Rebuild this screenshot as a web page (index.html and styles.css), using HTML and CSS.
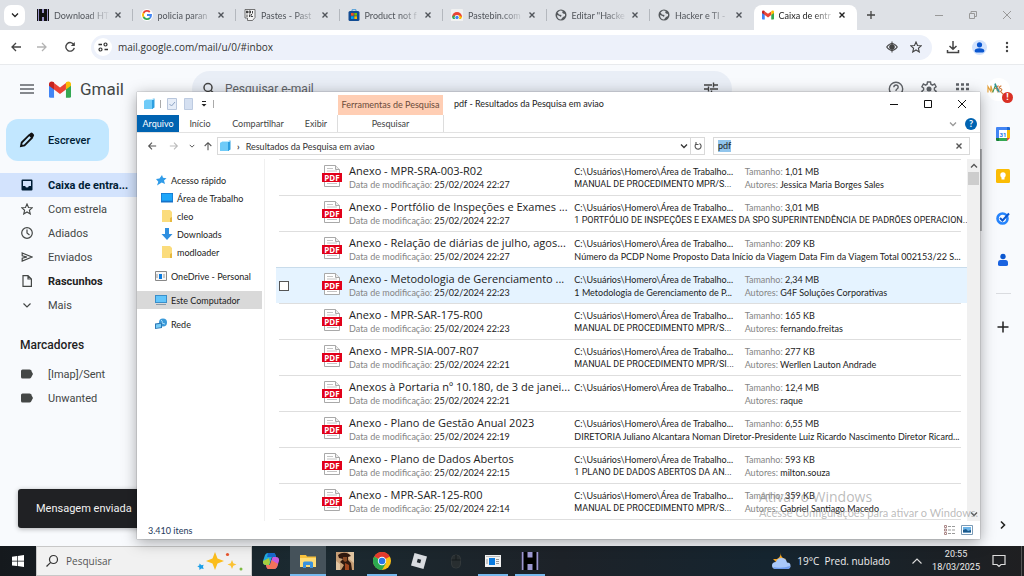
FILE: index.html
```html
<!DOCTYPE html>
<html lang="pt-BR">
	<head>
		<meta charset="utf-8">
		<title>Caixa de entrada - Gmail</title>
		<link rel="stylesheet" href="styles.css">
	</head>
	<body>
		<svg class="defs" aria-hidden="true">
			<symbol id="i-pdf" viewBox="0 0 20 22">
				<path d="M2.5.5h11l4 4v17h-15z" fill="#fff" stroke="#a9a9a9"/>
				<path d="M13.5.5v4h4" fill="#ececec" stroke="#a9a9a9"/>
				<path d="M5 3.500h6M5 6h10M5 18.500h10" stroke="#c4c4c4"/>
				<rect x="0" y="8" width="20" height="9" fill="#e2001a"/>
				<text x="10" y="15.500" text-anchor="middle" font-size="8" font-weight="bold" fill="#fff">PDF</text>
			</symbol>
			<symbol id="i-globe" viewBox="0 0 12 12">
				<circle cx="6" cy="6" r="5.500" fill="#54585c"/>
				<path d="M5 1.500L2.500 3.500 4 5.500l2.500.5L6 8 4.500 7 2 6c0 3 2 4.500 4 4.500L8 8l2-1V5L8 4.500 7 3l1-1z" fill="#dee1e6"/>
			</symbol>
			<symbol id="i-gmail" viewBox="0 0 24 18">
				<path d="M0 3v13.500Q0 18 1.600 18H5.500V8z" fill="#4285f4"/>
				<path d="M24 3v13.500Q24 18 22.400 18H18.500V8z" fill="#34a853"/>
				<path d="M5.500 1.800L12 6.700l6.500-4.900V9L12 13.800 5.500 9z" fill="#ea4335"/>
				<path d="M0 3C0 0 3.300-.7 5.500 1.200V9L0 5z" fill="#c5221f"/>
				<path d="M24 3c0-3-3.300-3.700-5.500-1.800V9L24 5z" fill="#fbbc04"/>
			</symbol>
			<symbol id="i-x" viewBox="0 0 8 8"><path d="M1.500 1.500l5 5m0-5l-5 5" fill="none" stroke="currentColor" stroke-width="1.400"/></symbol>
			<symbol id="i-down" viewBox="0 0 8 8"><path d="M1 2.500l3 3 3-3" fill="none" stroke="currentColor" stroke-width="1.300"/></symbol>
			<symbol id="i-back" viewBox="0 0 12 12"><path d="M11 6H2m4-4L2 6l4 4" fill="none" stroke="currentColor" stroke-width="1.300"/></symbol>
			<symbol id="i-lib" viewBox="0 0 12 12">
				<path d="M1 3l3-2v9l-3 1z" fill="#9be0ff"/><path d="M3 2h7v9H1V3z" fill="#6fcbf8"/><path d="M9 1l2.500-.5V9.500L9 11z" fill="#2c9fe0"/><path d="M3 2l1-1h7.500L10 2z" fill="#bdecff"/>
			</symbol>
			<symbol id="i-folder" viewBox="0 0 12 12"><path d="M1 0h8l2 2v10H1z" fill="#fbdc7c"/><path d="M9 8l2-1v5H9z" fill="#e7b93f"/></symbol>
			<symbol id="i-tag" viewBox="0 0 12 10"><path d="M1.500.5h7Q9.500.5 10 1.200L12 5l-2 3.800q-.5.700-1.500.7h-7Q0 9.500 0 8V2Q0 .5 1.500.5z" fill="#444746"/></symbol>
			<symbol id="i-star" viewBox="0 0 12 12"><path d="M6 1l1.500 3.500 3.700.3-2.800 2.500.9 3.700L6 9l-3.300 2 .9-3.700L.8 4.800l3.700-.3z" fill="none" stroke="currentColor" stroke-width="1.100"/></symbol>
			<symbol id="i-app" viewBox="0 0 16 12">
				<rect width="16" height="12" fill="#f3f3f3"/><rect x="1" y="1" width="14" height="1" fill="#bbb"/><rect x="4" y="3" width="6" height="7" fill="#0a7be0"/><path d="M11 4.500h3M11 6.500h3M11 8.500h3M2 4v5" stroke="#999"/>
			</symbol>
		</svg>

		<!-- browser -->
		<div class="tabstrip">
			<button class="tab-search" aria-label="Pesquisar guias"><svg class="s8"><use href="#i-down"/></svg></button>
			<div class="tabs">
				<div class="tab">
					<svg class="s12" viewBox="0 0 12 12"><path fill="#111" d="M0 0h12v12H0z"/><path fill="#9993c8" d="M1 0h1v12H1zM10 0h1v12h-1zM5 0h2v4H5zM5 8h2v4H5z"/></svg>
					<span class="tab-name">Download HT</span><button class="x" aria-label="Fechar"><svg class="s8"><use href="#i-x"/></svg></button>
				</div>
				<div class="tab">
					<svg class="s12" viewBox="0 0 12 12"><circle cx="6" cy="6" r="6" fill="#fff"/><g fill="none" stroke-width="1.900"><path d="M8.800 3A4 4 0 0 0 2.500 4" stroke="#ea4335"/><path d="M2.500 4a4 4 0 0 0 0 4" stroke="#fbbc04"/><path d="M2.500 8a4 4 0 0 0 6.300 1" stroke="#34a853"/><path d="M8.800 9A4 4 0 0 0 10 6H6" stroke="#4285f4"/></g></svg>
					<span class="tab-name">policia paran</span><button class="x" aria-label="Fechar"><svg class="s8"><use href="#i-x"/></svg></button>
				</div>
				<div class="tab">
					<svg class="s12" viewBox="0 0 12 12"><path d="M1 .5h10v8L8.500 11.500H3.500V9H1z" fill="#f3f3f3" stroke="#555" stroke-width=".8"/><path d="M2.500 2h1v2h-1zM5 2h1.500v2H5zM8.500 2v2.500M3 5.500v2.500M5.500 5.500v2.500M8 5.500H7v2h2" fill="none" stroke="#333" stroke-width=".9"/></svg>
					<span class="tab-name">Pastes - Past</span><button class="x" aria-label="Fechar"><svg class="s8"><use href="#i-x"/></svg></button>
				</div>
				<div class="tab">
					<svg class="s12" viewBox="0 0 12 12"><path d="M4 2V.7h4V2" fill="none" stroke="#4b9ad8"/><rect x=".5" y="2" width="11" height="10" rx="1.500" fill="#124c93"/><path fill="#f25022" d="M3 4h2.700v2.700H3z"/><path fill="#7fba00" d="M6.300 4H9v2.700H6.300z"/><path fill="#00a4ef" d="M3 7.300h2.700V10H3z"/><path fill="#ffb900" d="M6.300 7.300H9V10H6.300z"/></svg>
					<span class="tab-name">Product not f</span><button class="x" aria-label="Fechar"><svg class="s8"><use href="#i-x"/></svg></button>
				</div>
				<div class="tab">
					<svg class="s12" viewBox="0 0 12 12"><rect width="12" height="12" rx="1" fill="#f1f1f1"/><path d="M1 8a5 5 0 0 1 10 0z" fill="#ea4335"/><path d="M1 8l2-2 3 4H2z" fill="#34a853"/><path d="M11 8L8 6 6 10h4z" fill="#fbbc04"/><circle cx="6" cy="8.500" r="2.400" fill="#fff"/><circle cx="6" cy="8.500" r="1.700" fill="#4285f4"/><path fill="#f1f1f1" d="M0 10h12v2H0z"/></svg>
					<span class="tab-name">Pastebin.com</span><button class="x" aria-label="Fechar"><svg class="s8"><use href="#i-x"/></svg></button>
				</div>
				<div class="tab">
					<svg class="s12"><use href="#i-globe"/></svg>
					<span class="tab-name">Editar "Hacke</span><button class="x" aria-label="Fechar"><svg class="s8"><use href="#i-x"/></svg></button>
				</div>
				<div class="tab">
					<svg class="s12"><use href="#i-globe"/></svg>
					<span class="tab-name">Hacker e TI -</span><button class="x" aria-label="Fechar"><svg class="s8"><use href="#i-x"/></svg></button>
				</div>
				<div class="tab active">
					<svg class="s12"><use href="#i-gmail"/></svg>
					<span class="tab-name">Caixa de entr</span><button class="x" aria-label="Fechar"><svg class="s8"><use href="#i-x"/></svg></button>
				</div>
			</div>
			<button class="new-tab" aria-label="Nova guia"><svg class="s8" viewBox="0 0 8 8"><path d="M4 0v8M0 4h8" stroke="#444" stroke-width="1.300"/></svg></button>
			<div class="win-buttons">
				<button aria-label="Minimizar"><svg class="s8" viewBox="0 0 8 8"><path d="M0 4.500h8" stroke="#999"/></svg></button>
				<button aria-label="Restaurar"><svg class="s8" viewBox="0 0 8 8"><path d="M.5 2.500h5v5h-5zM2 2V.5h5.500v5H6" fill="none" stroke="#999"/></svg></button>
				<button aria-label="Fechar janela"><svg class="s8" viewBox="0 0 8 8"><path d="M0 0l8 8m0-8L0 8" stroke="#999"/></svg></button>
			</div>
		</div>

		<div class="toolbar">
			<button aria-label="Voltar"><svg class="s12"><use href="#i-back"/></svg></button>
			<button class="off flip" aria-label="Avançar"><svg class="s12"><use href="#i-back"/></svg></button>
			<button aria-label="Recarregar"><svg class="s12" viewBox="0 0 12 12"><path d="M10 4A4.300 4.300 0 1 0 10.300 6.800" fill="none" stroke="currentColor" stroke-width="1.400"/><path d="M10.800 1v4h-4z" fill="currentColor"/></svg></button>
			<div class="omnibox">
				<span class="site"><svg class="s12" viewBox="0 0 12 12"><path d="M1.500 3.500H5M7.500 8.500H11" stroke="#333" stroke-width="1.400"/><circle cx="8.500" cy="3.500" r="1.500" fill="none" stroke="#333" stroke-width="1.200"/><circle cx="3.500" cy="8.500" r="1.500" fill="none" stroke="#333" stroke-width="1.200"/></svg></span>
				<input class="url" type="text" aria-label="Endereço" value="mail.google.com/mail/u/0/#inbox">
				<svg class="s12" viewBox="0 0 12 12"><path d="M.7 6Q6-1 11.300 6 6 13 .7 6z" fill="none" stroke="#444" stroke-width="1.100"/><circle cx="6" cy="6" r="2.800" fill="#444"/><path d="M6 .5v11" stroke="#444"/></svg>
				<svg class="s12"><use href="#i-star"/></svg>
			</div>
			<button class="dl" aria-label="Downloads"><svg class="s14" viewBox="0 0 14 14"><path d="M7 1v8M3.500 6L7 9.300 10.500 6M1.500 10v2.500h11V10" fill="none" stroke="#444" stroke-width="1.500"/></svg></button>
			<button class="person" aria-label="Perfil"><svg class="s12" viewBox="0 0 12 12"><circle cx="6" cy="3.500" r="2.400" fill="#0b57d0"/><path d="M1.500 10.500V9q0-2.400 4.500-2.400T10.500 9v1.500z" fill="#0b57d0"/></svg></button>
			<button class="dots" aria-label="Menu"><svg class="s12" viewBox="0 0 12 12"><g fill="#444"><circle cx="6" cy="2" r="1.200"/><circle cx="6" cy="6" r="1.200"/><circle cx="6" cy="10" r="1.200"/></g></svg></button>
		</div>

		<!-- gmail -->
		<div class="gmail">
			<header class="g-head">
				<button class="burger" aria-label="Menu principal"><svg class="s14" viewBox="0 0 14 14"><path d="M0 3h14M0 7h14M0 11h14" stroke="#5f6368" stroke-width="1.400"/></svg></button>
				<svg class="g-logo"><use href="#i-gmail"/></svg>
				<span class="g-name">Gmail</span>
				<label class="g-search">
					<svg class="s14" viewBox="0 0 14 14"><circle cx="6" cy="5.500" r="4" fill="none" stroke="#444" stroke-width="1.500"/><path d="M9 8.500l4 4" stroke="#444" stroke-width="1.500"/></svg>
					<input type="text" placeholder="Pesquisar e-mail">
					<svg class="s14" viewBox="0 0 14 14"><path d="M0 3h8m2 0h4M9.500.5v5M0 7h4m2 0h8M4.500 4.500v5M0 11h6m2 0h6M7.500 8.500v5" stroke="#444" stroke-width="1.400"/></svg>
				</label>
				<div class="g-tools">
					<svg class="s16" viewBox="0 0 16 16"><circle cx="8" cy="8" r="6.700" fill="none" stroke="#5f6368" stroke-width="1.400"/><path d="M5.800 6.200Q6 4 8 4t2.200 2Q10.200 7.200 9 8T8 10m0 1v1.500" fill="none" stroke="#5f6368" stroke-width="1.400"/></svg>
					<svg class="s16" viewBox="0 0 16 16"><path d="M6.500 1h3l.4 2.200 1.600.9L13.600 3l1.500 2.700L13.400 7v2l1.700 1.300-1.500 2.700-2.100-1-1.600.9L9.500 15h-3l-.4-2.100-1.600-.9-2.100 1L.9 10.300 2.600 9V7L.9 5.700 2.400 3l2.100 1.100 1.600-.9z" fill="none" stroke="#5f6368" stroke-width="1.400"/><circle cx="8" cy="8" r="2.500" fill="#5f6368"/></svg>
					<svg class="s16" viewBox="0 0 16 16"><path d="M2 3.500h3m2 0h3m2 0h3M2 8h3m2 0h3m2 0h3M2 12.500h3m2 0h3m2 0h3" stroke="#5f6368" stroke-width="2.600"/></svg>
				</div>
				<div class="avatar">
					<svg viewBox="0 0 24 24"><circle cx="12" cy="12" r="12" fill="#fff"/><g fill="none" stroke-width="1.200"><path d="M1 15V9l3 5V8l2 7" stroke="#e3a13b"/><path d="M6 15l3-8 2 7" stroke="#3f9c5a"/><path d="M12 8l-3 3q6 0 2 4M15 8q-4 2-1 3t0 3l3 3" stroke="#d17a3c"/><path d="M8 6l5 9" stroke="#2a8fa8"/></g></svg>
					<span class="alert">!</span>
				</div>
			</header>
			<div class="g-body">
				<aside class="g-side">
					<button class="compose"><svg class="s16" viewBox="0 0 16 16"><path d="M2 14l.7-3.500 7.600-7.600 2.800 2.800-7.600 7.600z" fill="none" stroke="#111" stroke-width="1.800"/><path d="M10 2.500l1.500-1.500q1-.8 2 0l1.200 1.200q.8 1 0 2L13.300 5.800z" fill="#111"/></svg>Escrever</button>
					<nav>
						<a href="#inbox" class="sel"><svg class="s12" viewBox="0 0 12 12"><path fill-rule="evenodd" d="M1.500.5h9q1 0 1 1v9q0 1-1 1h-9q-1 0-1-1v-9q0-1 1-1zM2 2v5h2.200Q4.500 8.500 6 8.500T7.800 7H10V2z" fill="#001d35"/></svg>Caixa de entra...</a>
						<a href="#starred"><svg class="s12"><use href="#i-star"/></svg>Com estrela</a>
						<a href="#snoozed"><svg class="s12" viewBox="0 0 12 12"><circle cx="6" cy="6" r="5.300" fill="none" stroke="#444746" stroke-width="1.200"/><path d="M6 2.500V6l2.500 2" fill="none" stroke="#444746" stroke-width="1.200"/></svg>Adiados</a>
						<a href="#sent"><svg class="s12" viewBox="0 0 12 12"><path d="M1.200 2L11 6l-9.800 4V7.200L6 6 1.200 4.800z" fill="none" stroke="#444746" stroke-width="1.200"/></svg>Enviados</a>
						<a href="#drafts" class="bold"><svg class="s12" viewBox="0 0 12 12"><path d="M2 .6h5l3.400 3.400v7.400H2zM7 .6V4h3.400" fill="none" stroke="#444746" stroke-width="1.200"/></svg>Rascunhos</a>
						<a href="#more"><svg class="s12" viewBox="0 0 12 12"><path d="M2.500 4.500L6 8l3.500-3.500" fill="none" stroke="#444746" stroke-width="1.200"/></svg>Mais</a>
					</nav>
					<h2>Marcadores</h2>
					<nav>
						<a href="#imap"><svg class="s12"><use href="#i-tag"/></svg>[Imap]/Sent</a>
						<a href="#unwanted"><svg class="s12"><use href="#i-tag"/></svg>Unwanted</a>
					</nav>
				</aside>
				<aside class="g-apps">
					<svg class="s14" viewBox="0 0 14 14"><path fill="#4285f4" d="M0 1q0-1 1-1h10v3H3v8H0z"/><path fill="#1967d2" d="M11 0h2q1 0 1 1v2h-3z"/><path fill="#fbbc04" d="M11 3h3v8h-3z"/><path fill="#34a853" d="M3 11h8v3H3z"/><path fill="#188038" d="M0 11h3v3H1q-1 0-1-1z"/><path fill="#ea4335" d="M11 11h3l-3 3z"/><path fill="#fff" d="M3 3h8v8H3z"/><text x="7" y="9.500" text-anchor="middle" font-size="6" font-weight="bold" fill="#1a73e8">31</text></svg>
					<svg class="s14" viewBox="0 0 14 14"><rect width="14" height="14" rx="1.500" fill="#fbbc04"/><circle cx="7" cy="6" r="2.700" fill="#fff"/><path d="M5.500 8h3v2.500h-3z" fill="#fff"/></svg>
					<svg class="s14" viewBox="0 0 14 14"><circle cx="6.500" cy="7.500" r="5" fill="none" stroke="#2684fc" stroke-width="2.600"/><path d="M4 7l2.500 2.500L13 2.500" fill="none" stroke="#0b57d0" stroke-width="2"/></svg>
					<svg class="s14" viewBox="0 0 14 14"><circle cx="7" cy="3.500" r="2.700" fill="#0b57d0"/><path d="M2 10q0-3 2.500-3h5Q12 7 12 10v1.500Q12 13 10 13H4q-2 0-2-1.500z" fill="#1a63e0"/></svg>
					<hr>
					<svg class="s14 plus" viewBox="0 0 14 14"><path d="M7 1.500v11M1.500 7h11" stroke="#222" stroke-width="1.500"/></svg>
					<svg class="s12 expand" viewBox="0 0 12 12"><path d="M4 2.500L7.500 6 4 9.500" fill="none" stroke="#222" stroke-width="1.600"/></svg>
				</aside>
			</div>
		</div>

		<div class="page-thumb"></div>
		<div class="toast">Mensagem enviada</div>

		<!-- file explorer -->
		<section class="explorer">
			<div class="ex-title">
				<div class="quick">
					<svg class="s12"><use href="#i-lib"/></svg><i></i>
					<svg class="s12" viewBox="0 0 12 12"><path d="M1.500.5h9v11h-9z" fill="#e6edf8" stroke="#b8c6dc"/><path d="M3.500 6l2 2 3.500-4" fill="none" stroke="#8ea4c4"/></svg>
					<svg class="s12" viewBox="0 0 12 12"><path d="M1.500.5h8v11h-8z" fill="#d5e0f1" stroke="#bdcbe1"/></svg>
					<svg class="s8" viewBox="0 0 8 8"><path d="M2 1.500h4" stroke="#222"/><path d="M1.500 4h5L4 6.500z" fill="#222"/></svg><i></i>
				</div>
				<span class="ctx">Ferramentas de Pesquisa</span>
				<span class="name">pdf - Resultados da Pesquisa em aviao</span>
				<div class="ex-buttons">
					<button aria-label="Minimizar"><svg class="s8" viewBox="0 0 8 8"><path d="M0 4.500h8" stroke="#111"/></svg></button>
					<button aria-label="Maximizar"><svg class="s8" viewBox="0 0 8 8"><path d="M.5.5h7v7h-7z" fill="none" stroke="#111"/></svg></button>
					<button aria-label="Fechar"><svg class="s8" viewBox="0 0 8 8"><path d="M0 0l8 8m0-8L0 8" stroke="#111"/></svg></button>
				</div>
			</div>
			<div class="ribbon">
				<button class="file">Arquivo</button><button>Início</button><button class="wide">Compartilhar</button><button>Exibir</button><button class="search-tab">Pesquisar</button>
				<svg class="s8"><use href="#i-down"/></svg><span class="help">?</span>
			</div>
			<div class="address">
				<button aria-label="Voltar"><svg class="s10" viewBox="0 0 12 12"><use href="#i-back"/></svg></button>
				<button class="off flip" aria-label="Avançar"><svg class="s10" viewBox="0 0 12 12"><use href="#i-back"/></svg></button>
				<button class="small" aria-label="Recentes"><svg class="s8"><use href="#i-down"/></svg></button>
				<button class="up" aria-label="Acima"><svg class="s10" viewBox="0 0 12 12"><use href="#i-back"/></svg></button>
				<div class="path"><svg class="s12"><use href="#i-lib"/></svg><b>›</b><span>Resultados da Pesquisa em aviao</span><svg class="s8"><use href="#i-down"/></svg>
					<button aria-label="Atualizar"><svg class="s8" viewBox="0 0 8 8"><path d="M5.500 1.500A3 3 0 1 1 2 2M2 0v2.500h2.500" fill="none" stroke="#555" stroke-width="1.100"/></svg></button></div>
				<label class="find"><span>pdf</span><input type="text" aria-label="Pesquisar"><svg class="s8"><use href="#i-x"/></svg></label>
			</div>
			<div class="ex-body">
				<nav class="tree">
					<a href="#quick"><svg class="s12" viewBox="0 0 12 12"><path d="M7 1l1 2.800 3.500.4-2.500 2.200 1 3.600-3.300-1.500L2 11.500l1.300-3.800L1 5l3.500-.5z" fill="#2f9be8"/></svg>Acesso rápido</a>
					<a href="#desk" class="sub"><svg class="s12" viewBox="0 0 12 12"><path d="M0 1h12v9.500H0z" fill="#1673c9"/><path d="M.7 1.700h10.600v7H.7z" fill="#1ea7fa"/></svg>Área de Trabalho</a>
					<a href="#cleo" class="sub"><svg class="s12"><use href="#i-folder"/></svg>cleo</a>
					<a href="#down" class="sub"><svg class="s12" viewBox="0 0 12 12"><path d="M4 0h4v6h3.500L6 12 .5 6H4z" fill="#2f8fe0"/></svg>Downloads</a>
					<a href="#mod" class="sub"><svg class="s12"><use href="#i-folder"/></svg>modloader</a>
					<a href="#one" class="group"><svg class="s12" viewBox="0 0 12 12"><path d="M.5 1.500h11v9H.5z" fill="#f6f6f6" stroke="#888"/><path d="M4 4h3v5H4z" fill="#0a7be0"/><path d="M8 5h2M8 7h2M2 4v4" stroke="#999"/></svg>OneDrive - Personal</a>
					<a href="#pc" class="group on"><svg class="s12" viewBox="0 0 12 12"><path d="M0 1h12v8H0z" fill="#3a8ec9"/><path d="M1 2h10v6H1z" fill="#62c5fb"/><path d="M1 10.500h10" stroke="#8a9aa8"/></svg>Este Computador</a>
					<a href="#net" class="group"><svg class="s12" viewBox="0 0 12 12"><circle cx="8" cy="4.500" r="4" fill="#3b9ad9"/><path d="M6 2q2 1 1 3l3 1" stroke="#a9ddf8" fill="none"/><path d="M0 5.500l7-1V10l-7 1z" fill="#2d78b5"/><path d="M1 6.500l5-.7v3.500L1 10z" fill="#78cdf7"/></svg>Rede</a>
				</nav>
				<ul class="files">
					<li><svg class="pdf"><use href="#i-pdf"/></svg><strong>Anexo - MPR-SRA-003-R02</strong><span class="date"><em>Data de modificação:</em> 25/02/2024 22:27</span><span>C:\Usuários\Homero\Área de Trabalho...</span><span><em>Tamanho:</em> 1,01 MB</span><span class="c4 caps">MANUAL DE PROCEDIMENTO MPR/S...</span><span><em>Autores:</em> Jessica Maria Borges Sales</span></li>
					<li><svg class="pdf"><use href="#i-pdf"/></svg><strong>Anexo - Portfólio de Inspeções e Exames ...</strong><span class="date"><em>Data de modificação:</em> 25/02/2024 22:27</span><span>C:\Usuários\Homero\Área de Trabalho...</span><span><em>Tamanho:</em> 3,01 MB</span><span class="c4 caps long">1 PORTFÓLIO DE INSPEÇÕES E EXAMES DA SPO SUPERINTENDÊNCIA DE PADRÕES OPERACION...</span></li>
					<li><svg class="pdf"><use href="#i-pdf"/></svg><strong>Anexo - Relação de diárias de julho, agos...</strong><span class="date"><em>Data de modificação:</em> 25/02/2024 22:27</span><span>C:\Usuários\Homero\Área de Trabalho...</span><span><em>Tamanho:</em> 209 KB</span><span class="c4 long">Número da PCDP Nome Proposto Data Início da Viagem Data Fim da Viagem Total 002153/22 S...</span></li>
					<li class="hover"><input type="checkbox" aria-label="Selecionar item"><svg class="pdf"><use href="#i-pdf"/></svg><strong>Anexo - Metodologia de Gerenciamento ...</strong><span class="date"><em>Data de modificação:</em> 25/02/2024 22:23</span><span>C:\Usuários\Homero\Área de Trabalho...</span><span><em>Tamanho:</em> 2,34 MB</span><span class="c4">1 Metodologia de Gerenciamento de P...</span><span><em>Autores:</em> G4F Soluções Corporativas</span></li>
					<li><svg class="pdf"><use href="#i-pdf"/></svg><strong>Anexo - MPR-SAR-175-R00</strong><span class="date"><em>Data de modificação:</em> 25/02/2024 22:23</span><span>C:\Usuários\Homero\Área de Trabalho...</span><span><em>Tamanho:</em> 165 KB</span><span class="c4 caps">MANUAL DE PROCEDIMENTO MPR/S...</span><span><em>Autores:</em> fernando.freitas</span></li>
					<li><svg class="pdf"><use href="#i-pdf"/></svg><strong>Anexo - MPR-SIA-007-R07</strong><span class="date"><em>Data de modificação:</em> 25/02/2024 22:21</span><span>C:\Usuários\Homero\Área de Trabalho...</span><span><em>Tamanho:</em> 277 KB</span><span class="c4 caps">MANUAL DE PROCEDIMENTO MPR/SI...</span><span><em>Autores:</em> Werllen Lauton Andrade</span></li>
					<li><svg class="pdf"><use href="#i-pdf"/></svg><strong>Anexos à Portaria nº 10.180, de 3 de janei...</strong><span class="date"><em>Data de modificação:</em> 25/02/2024 22:21</span><span>C:\Usuários\Homero\Área de Trabalho...</span><span><em>Tamanho:</em> 12,4 MB</span><span class="c4"></span><span><em>Autores:</em> raque</span></li>
					<li><svg class="pdf"><use href="#i-pdf"/></svg><strong>Anexo - Plano de Gestão Anual 2023</strong><span class="date"><em>Data de modificação:</em> 25/02/2024 22:19</span><span>C:\Usuários\Homero\Área de Trabalho...</span><span><em>Tamanho:</em> 6,55 MB</span><span class="c4 long">DIRETORIA Juliano Alcantara Noman Diretor-Presidente Luiz Ricardo Nascimento Diretor Ricard...</span></li>
					<li><svg class="pdf"><use href="#i-pdf"/></svg><strong>Anexo - Plano de Dados Abertos</strong><span class="date"><em>Data de modificação:</em> 25/02/2024 22:15</span><span>C:\Usuários\Homero\Área de Trabalho...</span><span><em>Tamanho:</em> 593 KB</span><span class="c4 caps">1 PLANO DE DADOS ABERTOS DA AN...</span><span><em>Autores:</em> milton.souza</span></li>
					<li><svg class="pdf"><use href="#i-pdf"/></svg><strong>Anexo - MPR-SAR-125-R00</strong><span class="date"><em>Data de modificação:</em> 25/02/2024 22:14</span><span>C:\Usuários\Homero\Área de Trabalho...</span><span><em>Tamanho:</em> 359 KB</span><span class="c4 caps">MANUAL DE PROCEDIMENTO MPR/S...</span><span><em>Autores:</em> Gabriel Santiago Macedo</span></li>
				</ul>
				<div class="scroll">
					<svg class="s8 turn"><use href="#i-down"/></svg><div class="thumb"></div><svg class="s8 last"><use href="#i-down"/></svg>
				</div>
			</div>
			<div class="status">
				<span>3.410 itens</span>
				<svg class="s12" viewBox="0 0 12 12"><path d="M.5 1.500h2v2h-2zM.5 5h2v2h-2zM.5 8.500h2v2h-2z" fill="none" stroke="#a88"/><path d="M4 2.500h3m1 0h3M4 6h3m1 0h3M4 9.500h3m1 0h3" stroke="#999"/></svg>
				<svg class="s12" viewBox="0 0 12 12"><path d="M.5 1.500h11v9H.5z" fill="#fff" stroke="#7b9ab5"/><path d="M2 3h8v5.500H2z" fill="#6cb4e8"/><path d="M2 8.500V6l3-1 2 2 3-1v2.500z" fill="#1c5a8c"/></svg>
			</div>
		</section>

		<div class="watermark"><p>Ativar o Windows</p>Acesse Configurações para ativar o Windows.</div>

		<!-- windows taskbar -->
		<footer class="taskbar">
			<button class="start" aria-label="Iniciar"><svg class="s12" viewBox="0 0 12 12"><path d="M0 1.700l5-.7v4.700H0zM5.700.9L12 0v5.700H5.700zM0 6.400h5v4.700l-5-.7zM5.700 6.400H12V12l-6.300-.9z" fill="#fff"/></svg></button>
			<label class="task-search">
				<svg class="s14" viewBox="0 0 14 14"><circle cx="8.500" cy="5.500" r="4" fill="none" stroke="#333" stroke-width="1.200"/><path d="M5.700 8.300L1.500 12.500" stroke="#333" stroke-width="1.200"/></svg>
				<input type="text" placeholder="Pesquisar">
				<svg class="sparks" viewBox="0 0 46 20"><path d="M18 1l2.500 6.500L27 10l-6.500 2.500L18 19l-2.500-6.500L9 10l6.500-2.500z" fill="#fbbd1c"/><path d="M35 9l1.300 3.200L39.500 13.500l-3.200 1.200L35 18l-1.300-3.300-3.200-1.200 3.200-1.300z" fill="#fbc233"/><path d="M2.500 12.500l2 1.700 2.200-.5-.8 2 .8 2.200-2.400-.5-1.800 1.500-.2-2.400-2-1.200 2-.8z" fill="#1b9fe8"/><circle cx="30.500" cy="3.500" r="1.600" fill="#e8552d"/><circle cx="44" cy="18" r="1.500" fill="#7dbb42"/></svg>
			</label>
			<div class="apps">
				<button aria-label="Copilot"><svg class="s18" viewBox="0 0 18 18"><path d="M6 1h5.500q1.500 0 2 2l.5 2H10L7.500 13H4Q.5 13 1 9l2-6Q4 1 6 1z" fill="#21a8dd"/><path d="M6 1h5.500q1.500 0 2 2l.5 2H5z" fill="#1766c9"/><path d="M1 9l6-3 1 4-1 3H4Q.5 13 1 9z" fill="#a5cc3e"/><path d="M12 17H6.500Q5 17 4.500 15L4 13h4l2.500-8H14q3.500 0 3 4l-2 6q-1 2-3 2z" fill="#c85ae0"/><path d="M12 17H6.500Q5 17 4.500 15L4 13h4l1.500-5 6.500 4-1 3q-1 2-3 2z" fill="#f4725a"/></svg></button>
				<button class="current" aria-label="Explorador"><svg class="s18" viewBox="0 0 18 18"><path d="M1 3h6l1 1.500h9V15H1z" fill="#f8c13c"/><path d="M1 6h16v9H1z" fill="#ffdc74"/><path d="M4 16v-5q0-1.500 1.500-1.500h7Q14 9.500 14 11v5h-3v-3H7v3z" fill="#3a92dd"/></svg></button>
				<button aria-label="San Andreas"><svg class="s18" viewBox="0 0 18 18"><path fill="#c79f76" d="M0 0h18v18H0z"/><path fill="#e0c4a0" d="M12 0h6v11l-5-4zM0 9l4 3v6H0z"/><path d="M2 3q5-4 11-1l2 2-3 1v3l3 3 1 7H5l3-5-4-3 3-3-4-1z" fill="#30190f"/><path d="M7 5h4v4l-2 1-2-2z" fill="#8a4a25"/><path d="M9 11l4 2v5H9z" fill="#a14720"/></svg></button>
				<button class="open" aria-label="Chrome"><svg class="s18" viewBox="0 0 18 18"><circle cx="9" cy="9" r="9" fill="#fbc116"/><path d="M9 9L1.200 4.500A9 9 0 0 1 16.800 4.500z" fill="#e33b2e"/><path d="M9 9l-7.800-4.500A9 9 0 0 0 9 18l4-6.800z" fill="#2da94f"/><path d="M9 5h7.900L16.800 4.500H9z" fill="#e33b2e"/><circle cx="9" cy="9" r="4.200" fill="#fff"/><circle cx="9" cy="9" r="3.300" fill="#2a76e8"/></svg></button>
				<button aria-label="Roblox"><svg class="s18" viewBox="0 0 18 18"><path d="M4.500 1L17 4.500 13.500 17 1 13.500z" fill="#d9dce0"/><path d="M7.800 6.800l3.400 1-1 3.400-3.400-1z" fill="#20282d"/></svg></button>
				<button aria-label="Mouse"><svg class="s18" viewBox="0 0 18 18"><rect x="4.500" y="3" width="9" height="13" rx="4" fill="#282e30" stroke="#33393b"/><path d="M4.500 8h9M9 3v5" stroke="#151a1d"/></svg></button>
				<button class="open" aria-label="Aplicativo"><svg class="app"><use href="#i-app"/></svg></button>
				<button class="open" aria-label="H"><svg class="s18" viewBox="0 0 18 18"><path fill="#000" d="M0 0h18v18H0z"/><path fill="#9b96cf" d="M1 0h1.500v18H1zM15.500 0H17v18h-1.500zM6.500 0h5v5.500h-5zM6.500 12h5v6h-5z"/><path stroke="#706a9e" d="M0 0v18M18 0v18"/></svg></button>
			</div>
			<div class="tray">
				<svg class="s20" viewBox="0 0 20 20"><path d="M10 1q-1 6 5 7l-3 4H6L2 8l4 0q4-2 4-7z" fill="#f5a623"/><path d="M5 18Q1 18 1 14.500T5 11Q6 7 10.500 7t5.500 4.500q3.500 0 3.500 3.200T16 18z" fill="#a9c8fa"/><path d="M2 16q1 2 3 2h11q3 0 3.500-3Q10 18 2 16z" fill="#6f9df0"/></svg>
				<span class="weather">19°C&nbsp; Pred. nublado</span>
				<svg class="s10" viewBox="0 0 10 10"><path d="M.5 7.500L5 3l4.500 4.500" fill="none" stroke="#ddd" stroke-width="1.100"/></svg>
				<span class="clock">20:55<br>18/03/2025</span>
				<svg class="s14" viewBox="0 0 14 14"><path d="M1 1.500h12v9H9L7 12.500 5 10.500H1z" fill="none" stroke="#ddd" stroke-width="1.200"/></svg>
			</div>
		</footer>
	</body>
</html>
```

FILE: styles.css
```css
*{
	box-sizing: border-box;
	padding: 0;
	margin: 0;
}
body{
	position: relative;
	display: flex;
	flex-direction: column;
	height: 100vh;
	overflow: hidden;
	font-family: "Open Sans", "Noto Sans", sans-serif;
	font-size: 9px;
	color: #222;
	background: #f8fafd;
}
button{
	display: flex;
	align-items: center;
	justify-content: center;
	border: 0;
	background: none;
	font: inherit;
	color: inherit;
}
input{
	border: 0;
	background: none;
	font: inherit;
	color: inherit;
	min-width: 0;
	outline: none;
}
a{
	color: inherit;
	text-decoration: none;
}
svg{
	flex: none;
	display: block;
}
.defs{
	display: none;
}
.s8{ width: 8px; height: 8px; }
.s10{ width: 10px; height: 10px; }
.s12{ width: 12px; height: 12px; }
.s14{ width: 14px; height: 14px; }
.s16{ width: 16px; height: 16px; }
.s18{ width: 18px; height: 18px; }
.s20{ width: 20px; height: 20px; }
.flip{
	transform: scaleX(-1);
}
.off{
	opacity: 0.4;
}

/* browser */
.tabstrip{
	display: flex;
	align-items: center;
	flex: none;
	height: 30px;
	padding-left: 4px;
	background: #dee1e6;
	color: #50545a;
	font-family: Lato, sans-serif;
}
.tab-search{
	width: 21px;
	height: 21px;
	border-radius: 7px;
	background: #fff;
	color: #222;
}
.tabs{
	display: flex;
	flex: 0 1 828px;
	min-width: 0;
	height: 100%;
	margin-left: 4px;
}
.tab{
	display: flex;
	align-items: center;
	flex: 1 1 0;
	min-width: 0;
	padding: 0 11px 0 8px;
	position: relative;
}
.tab:not(.active):not(:nth-child(7))::after{
	content: "";
	position: absolute;
	right: 0;
	top: 9px;
	width: 1px;
	height: 12px;
	background: #b4b8be;
}
.tab-name{
	flex: 1;
	min-width: 0;
	margin: 0 4px 0 5px;
	overflow: hidden;
	white-space: nowrap;
	-webkit-mask-image: linear-gradient(90deg, #000 34px, transparent 56px);
	mask-image: linear-gradient(90deg, #000 34px, transparent 56px);
}
.tab.active{
	margin-top: 5px;
	padding-bottom: 5px;
	border-radius: 8px 8px 0 0;
	background: #fff;
	color: #222;
}
.new-tab{
	width: 24px;
	margin-left: 2px;
}
.win-buttons{
	display: flex;
	margin-left: auto;
}
.win-buttons button{
	width: 34px;
}
.toolbar{
	display: flex;
	align-items: center;
	flex: none;
	height: 35px;
	padding: 0 4px 0 2px;
	background: #fff;
	border-bottom: 1px solid #e8eaed;
	color: #444;
}
.toolbar > button{
	width: 27px;
}
.omnibox{
	display: flex;
	align-items: center;
	flex: 1;
	gap: 12px;
	height: 25px;
	margin: 0 7px 0 8px;
	padding: 0 10px 0 3px;
	border-radius: 13px;
	background: #edf1fa;
}
.site{
	display: grid;
	place-items: center;
	width: 18px;
	height: 18px;
	border-radius: 9px;
	background: #fff;
}
.url{
	flex: 1;
	margin-left: -6px;
	font-size: 10px;
	color: #333;
}
.person svg{
	width: 15px;
	height: 15px;
	padding: 1px;
	border-radius: 8px;
	background: #d3e3fd;
}

/* gmail */
.gmail{
	display: flex;
	flex-direction: column;
	flex: 1;
	min-height: 0;
	font-family: Roboto, "Liberation Sans", sans-serif;
	font-size: 11px;
	color: #444746;
}
.g-head{
	display: flex;
	align-items: center;
	height: 48px;
	padding: 0 14px 0 20px;
}
.g-logo{
	width: 22px;
	height: 17px;
	margin-left: 15px;
}
.g-name{
	width: 112px;
	margin-left: 9px;
	font-size: 17px;
}
.g-search{
	display: flex;
	align-items: center;
	flex: 0 1 540px;
	height: 36px;
	padding: 0 14px 0 10px;
	margin-right: auto;
	border-radius: 18px;
	background: #e9eef6;
}
.g-search input{
	flex: 1;
	margin-left: 9px;
	font-size: 12px;
}
.g-search input::placeholder{
	color: #5f6368;
}
.g-tools{
	display: flex;
	gap: 17px;
	margin-right: 17px;
}
.avatar{
	position: relative;
	width: 23px;
	height: 23px;
}
.avatar svg{
	width: 23px;
	height: 23px;
}
.alert{
	position: absolute;
	right: -3px;
	bottom: -2px;
	width: 11px;
	height: 11px;
	border-radius: 6px;
	background: #d93025;
	color: #fff;
	font-size: 9px;
	font-weight: bold;
	line-height: 11px;
	text-align: center;
}
.g-body{
	display: flex;
	justify-content: space-between;
	flex: 1;
}
.g-side{
	width: 192px;
}
.compose{
	justify-content: flex-start;
	width: 103px;
	height: 42px;
	margin: 6px 0 12px 6px;
	padding-left: 13px;
	gap: 13px;
	border-radius: 12px;
	background: #c2e7ff;
	color: #001d35;
	font-weight: 500;
}
.g-side nav a{
	display: flex;
	align-items: center;
	gap: 15px;
	height: 24px;
	padding-left: 21px;
}
.g-side nav a.sel{
	border-radius: 0 12px 12px 0;
	background: #d3e3fd;
	color: #001d35;
	font-weight: bold;
}
.g-side nav a.bold{
	color: #222;
	font-weight: bold;
}
.g-side h2{
	margin: 18px 0 7px 20px;
	line-height: 20px;
	font-size: 12px;
	font-weight: 500;
	color: #1f1f1f;
}
.g-apps{
	display: flex;
	flex-direction: column;
	align-items: center;
	gap: 28px;
	width: 42px;
	padding: 14px 0 15px;
}
.g-apps hr{
	width: 15px;
	border: 0;
	border-top: 1px solid #dadce0;
	margin: -2px 0;
}
.expand{
	margin-top: auto;
}
.page-thumb{
	position: absolute;
	right: 42px;
	top: 149px;
	width: 6px;
	height: 82px;
	background: #b4b6b9;
}
.toast{
	position: absolute;
	left: 18px;
	bottom: 48px;
	width: 220px;
	padding: 0 18px;
	border-radius: 3px;
	background: #202124;
	box-shadow: 0 1px 5px rgba(0,0,0,0.3);
	color: #f2f2f2;
	font-family: Roboto, sans-serif;
	font-size: 11px;
	line-height: 39px;
}

/* explorer window */
.explorer{
	position: absolute;
	left: 137px;
	right: 44px;
	top: 92px;
	bottom: 37px;
	display: flex;
	flex-direction: column;
	background: #fff;
	box-shadow: 0 0 1px rgba(0,0,0,0.5), 0 3px 14px rgba(0,0,0,0.35);
	font-family: Lato, "Open Sans", sans-serif;
}
.ex-title{
	display: flex;
	align-items: center;
	height: 23px;
	padding: 0 1px 0 6px;
}
.quick{
	display: flex;
	align-items: center;
	gap: 5px;
	width: 195px;
}
.quick i{
	width: 1px;
	height: 8px;
	background: #aaa;
}
.ctx{
	align-self: flex-end;
	width: 105px;
	height: 20px;
	background: #ffceb4;
	color: #6b4a3a;
	line-height: 20px;
	text-align: center;
	white-space: nowrap;
}
.ex-title .name{
	margin-left: 11px;
}
.ex-buttons{
	display: flex;
	margin-left: auto;
}
.ex-buttons button{
	width: 34px;
}
.ribbon{
	display: flex;
	align-items: center;
	height: 18px;
	padding-right: 3px;
	border-bottom: 1px solid #e2e2e2;
	color: #444;
}
.ribbon button{
	width: 42px;
	height: 17px;
}
.ribbon .wide{
	width: 74px;
}
.ribbon .file{
	background: #0063b1;
	color: #fff;
}
.ribbon .search-tab{
	width: 107px;
	border: solid #ddd;
	border-width: 0 1px;
}
.ribbon > svg{
	margin: 0 8px 0 auto;
	color: #999;
}
.help{
	width: 12px;
	height: 12px;
	border-radius: 6px;
	background: #0063b1;
	color: #fff;
	font-weight: bold;
	line-height: 12px;
	text-align: center;
}
.address{
	display: flex;
	align-items: center;
	height: 26px;
	padding: 0 10px 0 4px;
	color: #555;
}
.address > button{
	width: 22px;
}
.address > .small{
	width: 14px;
}
.address > .small svg{
	width: 6px;
}
.address > .up{
	width: 18px;
	transform: rotate(90deg);
}
.path{
	display: flex;
	align-items: center;
	flex: 1;
	height: 18px;
	padding-left: 1px;
	border: 1px solid #d9d9d9;
	color: #333;
}
.path b{
	margin: 0 6px;
}
.path span{
	flex: 1;
}
.path button{
	width: 14px;
	height: 16px;
	margin-left: 2px;
	border-left: 1px solid #d9d9d9;
}
.find{
	display: flex;
	align-items: center;
	width: 257px;
	height: 18px;
	margin-left: 8px;
	padding: 0 6px 0 4px;
	border: 1px solid #d9d9d9;
}
.find span{
	background: #91c5ec;
	color: #222;
	line-height: 12px;
}
.find input{
	flex: 1;
}
.ex-body{
	display: flex;
	flex: 1;
	min-height: 0;
}
.tree{
	width: 128px;
	padding: 12px 2px 0 0;
	border-right: 1px solid #f0f0f0;
}
.tree a{
	display: flex;
	align-items: center;
	gap: 4px;
	height: 18px;
	padding-left: 18px;
	white-space: nowrap;
}
.tree .sub{
	padding-left: 24px;
}
.tree .group{
	margin-top: 6px;
}
.tree .on{
	background: #d9d9d9;
}
.files{
	flex: 1;
	padding: 0 6px 0 14px;
	list-style: none;
}
.files li{
	display: grid;
	grid-template-columns: 43px 27px 225fr 170fr 216fr;
	grid-template-rows: 13px 13px;
	height: 36px;
	padding-top: 5px;
	border-top: 1px solid #dedede;
	line-height: 13px;
	white-space: nowrap;
}
.files li:last-child{
	height: 37px;
	border-bottom: 1px solid #dedede;
}
.files li > *{
	min-width: 0;
}
.files .hover{
	margin: 0 -6px 0 -3px;
	padding-left: 3px;
	padding-right: 6px;
	background: #e5f3ff;
	border-color: #c9dceb;
}
.files input{
	appearance: none;
	grid-area: 1 / 1 / 3 / 2;
	align-self: center;
	width: 10px;
	height: 10px;
	border: 1px solid #555;
	background: #fff;
}
.pdf{
	grid-area: 1 / 2 / 3 / 3;
	width: 20px;
	height: 22px;
	font-family: "Open Sans", sans-serif;
}
.files strong{
	grid-column: 3;
	font-family: "Open Sans", sans-serif;
	font-size: 11px;
	font-weight: normal;
	line-height: 11px;
}
.date{
	grid-area: 2 / 3;
}
.files em{
	font-style: normal;
	color: #858585;
}
.c4{
	grid-column: 4;
}
.long{
	grid-column: 4 / -1;
}
.caps{
	font-family: Roboto, sans-serif;
}
.scroll{
	display: flex;
	flex-direction: column;
	align-items: center;
	width: 13px;
	padding: 3px 0;
	background: #f0f0f0;
	color: #555;
}
.turn{
	transform: rotate(180deg);
}
.thumb{
	width: 11px;
	height: 13px;
	margin-top: 2px;
	background: #cdcdcd;
}
.last{
	margin-top: auto;
}
.status{
	display: flex;
	align-items: center;
	gap: 5px;
	height: 18px;
	padding: 0 7px 0 11px;
	color: #1e395b;
}
.status span{
	margin-right: auto;
}
.watermark{
	position: absolute;
	left: 759px;
	bottom: 56px;
	color: rgba(130,130,130,0.55);
	font-family: Lato, sans-serif;
	font-size: 11px;
	line-height: 14px;
	white-space: nowrap;
}
.watermark p{
	font-family: "Open Sans", sans-serif;
	font-size: 14px;
	line-height: 18px;
}

/* taskbar */
.taskbar{
	display: flex;
	align-items: center;
	flex: none;
	height: 30px;
	background: linear-gradient(90deg, #15191d, #1b2a31 30%, #1d2228 55%, #152530 75%, #1f1f21);
	color: #eee;
}
.start{
	width: 36px;
	height: 30px;
}
.task-search{
	display: flex;
	align-items: center;
	width: 216px;
	height: 30px;
	padding: 0 8px;
	background: #f1f1f1;
	border: 1px solid #c8c8c8;
	color: #444;
	font-size: 10px;
}
.task-search input{
	flex: 1;
	margin-left: 7px;
}
.task-search input::placeholder{
	color: #555;
}
.sparks{
	width: 46px;
	height: 20px;
}
.apps{
	display: flex;
	gap: 1px;
	margin-left: 1px;
}
.apps button{
	width: 36px;
	height: 30px;
	position: relative;
}
.apps .current{
	background: #45525a;
}
.apps .current::after,
.apps .open::after{
	content: "";
	position: absolute;
	left: 3px;
	right: 3px;
	bottom: 0;
	height: 2px;
	background: #76b9ed;
}
.apps .current::after{
	left: 0;
	right: 0;
}
.app{
	width: 16px;
	height: 12px;
}
.tray{
	display: flex;
	align-items: center;
	height: 30px;
	margin-left: auto;
	margin-right: 2px;
	padding-right: 15px;
	border-right: 1px solid #555;
}
.weather{
	margin: 0 22px 0 6px;
	font-size: 10px;
}
.clock{
	margin: 0 12px 0 10px;
	font-family: Roboto, sans-serif;
	line-height: 13px;
	text-align: center;
}
```
